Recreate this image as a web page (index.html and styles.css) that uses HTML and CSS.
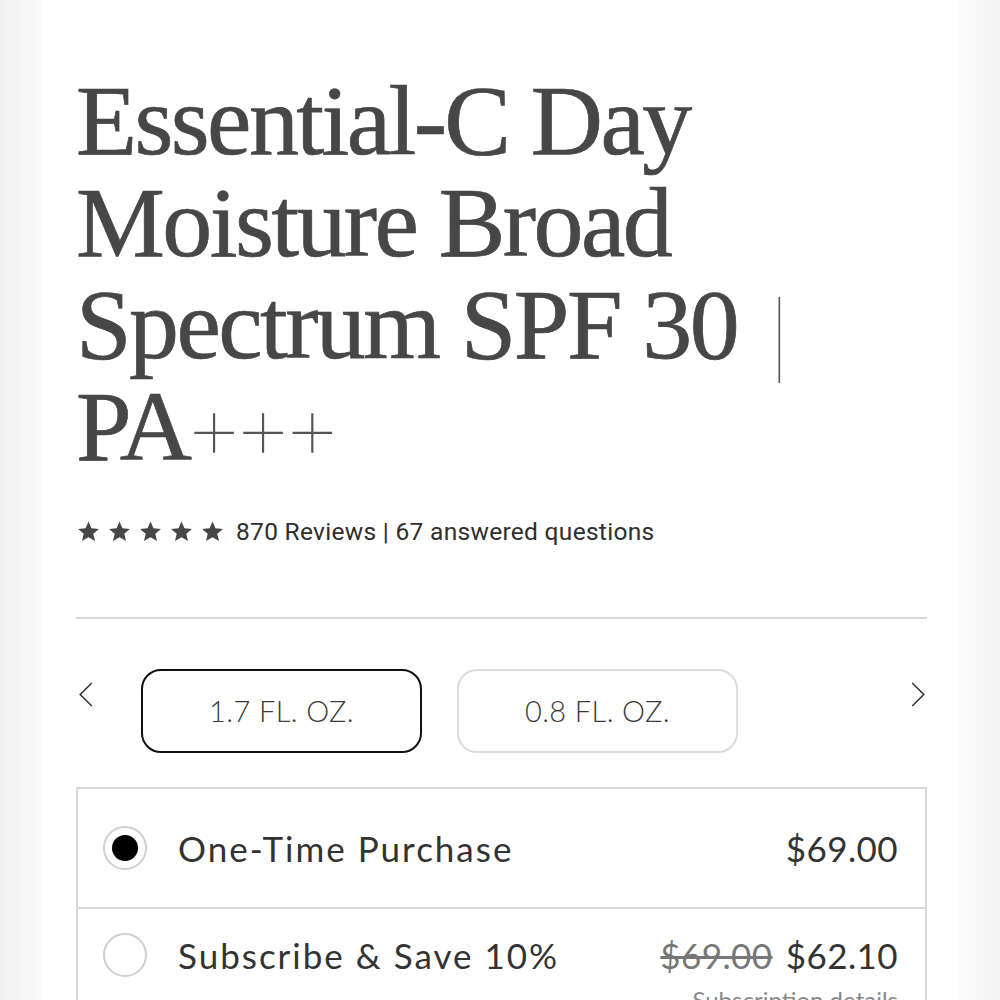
FILE: index.html
```html
<!DOCTYPE html>
<html lang="en">
    <head>
        <meta charset="UTF-8">
        <title>Essential-C Day Moisture</title>
        <link rel="stylesheet" href="styles.css">
    </head>
    <body>
        <div class="page">
            <h1 class="title">Essential-C Day Moisture Broad Spectrum SPF 30 <span class="bar">|</span> <span class="nowrap">PA<span class="plus">+++</span></span></h1>

            <div class="rating">
                <div class="stars">
                    <svg viewBox="0 0 24 24"><path d="M12 1.5l3.1 7.2 7.8.6-5.9 5.1 1.8 7.6L12 18l-6.8 4 1.8-7.6-5.9-5.1 7.8-.6z"/></svg>
                    <svg viewBox="0 0 24 24"><path d="M12 1.5l3.1 7.2 7.8.6-5.9 5.1 1.8 7.6L12 18l-6.8 4 1.8-7.6-5.9-5.1 7.8-.6z"/></svg>
                    <svg viewBox="0 0 24 24"><path d="M12 1.5l3.1 7.2 7.8.6-5.9 5.1 1.8 7.6L12 18l-6.8 4 1.8-7.6-5.9-5.1 7.8-.6z"/></svg>
                    <svg viewBox="0 0 24 24"><path d="M12 1.5l3.1 7.2 7.8.6-5.9 5.1 1.8 7.6L12 18l-6.8 4 1.8-7.6-5.9-5.1 7.8-.6z"/></svg>
                    <svg viewBox="0 0 24 24"><path d="M12 1.5l3.1 7.2 7.8.6-5.9 5.1 1.8 7.6L12 18l-6.8 4 1.8-7.6-5.9-5.1 7.8-.6z"/></svg>
                </div>
                <span class="rating_text">870 Reviews | 67 answered questions</span>
            </div>

            <div class="divider"></div>

            <div class="sizes">
                <svg class="chevron" viewBox="0 0 16 28"><polyline points="14,2 2,14 14,26"/></svg>
                <div class="chips">
                    <div class="chip active">1.7 FL. OZ.</div>
                    <div class="chip">0.8 FL. OZ.</div>
                </div>
                <svg class="chevron right" viewBox="0 0 16 28"><polyline points="2,2 14,14 2,26"/></svg>
            </div>

            <div class="options">
                <div class="option">
                    <span class="radio checked"></span>
                    <span class="option_label">One-Time Purchase</span>
                    <span class="price">$69.00</span>
                </div>
                <div class="option sub">
                    <div class="option_row">
                        <span class="radio"></span>
                        <span class="option_label">Subscribe &amp; Save 10%</span>
                        <span class="price"><s class="old">$69.00</s> $62.10</span>
                    </div>
                    <div class="details">Subscription details</div>
                </div>
            </div>
        </div>
    </body>
</html>
```

FILE: styles.css
```css
body{
    margin: 0;
    background: linear-gradient(to right, #f1f1f1, #fafafa 40px, #fafafa 960px, #f3f3f3);
    height: 1000px;
    overflow: hidden;
}

.page{
    width: 851px;
    height: 1000px;
    margin-left: 43px;
    padding: 70px 31px 0 33px;
    background-color: white;
    box-sizing: content-box;
}

.title{
    margin: 0;
    font-family: "Liberation Serif", serif;
    font-weight: normal;
    font-size: 100px;
    line-height: 102px;
    letter-spacing: -2.6px;
    color: #474747;
    -webkit-text-stroke: 0.7px #474747;
}

.nowrap{
    white-space: nowrap;
}

.bar{
    margin-left: 10px;
    font-family: "Inter", sans-serif;
    font-weight: 100;
    font-size: 72px;
    line-height: 0;
    letter-spacing: 0;
    vertical-align: -8px;
    color: #555;
    -webkit-text-stroke: 0;
}

.plus{
    margin-left: -6px;
    font-family: "Inter", sans-serif;
    font-weight: 100;
    font-size: 96px;
    line-height: 0;
    letter-spacing: -12px;
    color: #555;
    -webkit-text-stroke: 0;
}

.rating{
    display: flex;
    align-items: center;
    margin-top: 38px;
    height: 30px;
}

.stars{
    display: flex;
    gap: 8px;
    margin-left: 1px;
}

.stars svg{
    width: 23px;
    height: 23px;
    fill: #474747;
}

.rating_text{
    margin-left: 12px;
    font-family: "Roboto", sans-serif;
    font-size: 24.5px;
    letter-spacing: 0.3px;
    color: #2e2e2e;
}

.divider{
    margin-top: 71px;
    height: 2px;
    background-color: #d6d6d6;
}

.sizes{
    display: flex;
    align-items: center;
    margin-top: 50px;
}

.chevron{
    width: 16px;
    height: 27px;
    fill: none;
    stroke: #333;
    stroke-width: 1.6;
    margin-left: 2px;
    margin-bottom: 34px;
}

.chevron.right{
    margin-left: auto;
    margin-right: 1px;
}

.chips{
    display: flex;
    gap: 35px;
    margin-left: 47px;
}

.chip{
    height: 80px;
    line-height: 80px;
    padding: 0 66px;
    border: 2px solid #dcdcdc;
    border-radius: 20px;
    font-family: "Lato", sans-serif;
    font-weight: 300;
    font-size: 29px;
    letter-spacing: 0.4px;
    color: #3a3a3a;
}

.chip.active{
    border-color: #111;
}

.options{
    margin-top: 34px;
    border: 2px solid #d8d8d8;
    border-bottom: none;
}

.option{
    display: flex;
    align-items: center;
    height: 118px;
    padding: 0 27px 0 25px;
    font-family: "Lato", sans-serif;
    font-size: 35px;
    color: #333;
}

.option.sub{
    display: block;
    height: 200px;
    border-top: 2px solid #d8d8d8;
    padding-top: 24px;
}

.option_row{
    display: flex;
    align-items: center;
}

.radio{
    width: 40px;
    height: 40px;
    border: 2px solid #cfcfcf;
    border-radius: 50%;
    box-sizing: content-box;
    position: relative;
    flex-shrink: 0;
}

.radio.checked::after{
    content: "";
    position: absolute;
    left: 7px;
    top: 7px;
    width: 26px;
    height: 26px;
    border-radius: 50%;
    background-color: #000;
}

.option_label{
    margin-left: 31px;
    letter-spacing: 2px;
}

.price{
    margin-left: auto;
    letter-spacing: 0.4px;
}

.old{
    color: #777;
    margin-right: 4px;
}

.details{
    margin-top: 8px;
    text-align: right;
    font-size: 24px;
    color: #888;
}
```
